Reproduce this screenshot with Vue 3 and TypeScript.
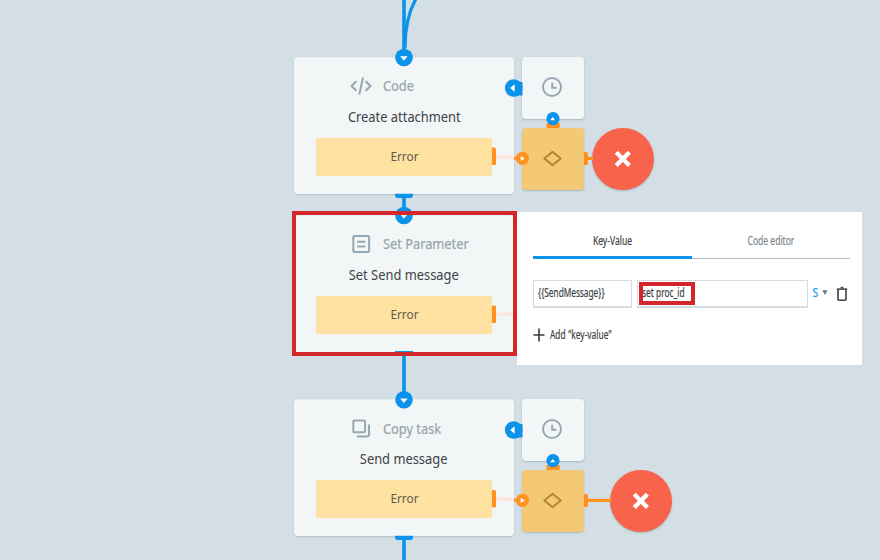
<script setup lang="ts">
import { ref } from 'vue'

type Kind = 'code' | 'param' | 'copy'
interface FlowNode { kind: Kind; type: string; title: string; y: number }
interface Escalation { y: number; end: number }

const nodes: FlowNode[] = [
  { kind: 'code', type: 'Code', title: 'Create attachment', y: 57 },
  { kind: 'param', type: 'Set Parameter', title: 'Set Send message', y: 215 },
  { kind: 'copy', type: 'Copy task', title: 'Send message', y: 399 },
]
const escalations: Escalation[] = [
  { y: 57, end: 592 },
  { y: 399, end: 610 },
]
const tabs = ['Key-Value', 'Code editor']
const activeTab = ref(0)
</script>

<template>
  <main class="canvas">
    <section v-for="n in nodes" :key="n.title" class="node" :class="n.kind" :style="{ top: n.y + 'px' }">
      <header class="node-head">
        <svg class="node-icon" viewBox="0 0 22 20" width="22" height="20" fill="none">
          <g v-if="n.kind === 'code'" stroke="#98a8b2" stroke-width="2.1">
            <path d="M6.4 5.3 1.5 10l4.9 4.7M15.6 5.3l4.9 4.7-4.9 4.7M13 1.6 9.3 18.5" />
          </g>
          <g v-else-if="n.kind === 'param'" stroke="#98a8b2" stroke-width="2">
            <rect x="3.3" y="2" width="15.8" height="16" rx="1" />
            <path d="M7 7.8h8.5M7 12.4h8.5" />
          </g>
          <g v-else stroke="#98a8b2" stroke-width="2">
            <rect x="3.3" y="1.6" width="11.8" height="11.6" rx="1" />
            <path d="M19 5.4V16a1.4 1.4 0 0 1-1.4 1.4H7" />
          </g>
        </svg>
        <span class="node-type">{{ n.type }}</span>
      </header>
      <div class="node-title"><span>{{ n.title }}</span></div>
      <div class="node-error"><span>Error</span></div>
    </section>

    <template v-for="e in escalations" :key="e.y">
      <div class="tile timer" :style="{ top: e.y + 'px' }">
        <svg width="22" height="22" viewBox="0 0 22 22" fill="none" stroke="#98a8b2" stroke-width="2">
          <circle cx="10" cy="10" r="9" /><path d="M10.2 5.8v5h4.3" />
        </svg>
      </div>
      <div class="tile condition" :style="{ top: e.y + 71 + 'px' }">
        <svg width="20" height="18" viewBox="0 0 20 18" fill="none" stroke="#b08534" stroke-width="1.9">
          <path d="M9.5 1.7 17.7 8.5 9.5 15.3 1.3 8.5Z" stroke-linejoin="round" />
        </svg>
      </div>
      <div class="stop" :style="{ top: e.y + 71 + 'px', left: e.end + 'px' }">
        <svg width="20" height="20" viewBox="0 0 20 20" stroke="#fff" stroke-width="4.3">
          <path d="M3.2 3.2 16.4 16.4M16.4 3.2 3.2 16.4" />
        </svg>
      </div>
    </template>

    <svg class="wires" width="880" height="560" viewBox="0 0 880 560" fill="none">
      <g stroke="#0b92e9" stroke-width="3.6">
        <path d="M404 0V52M404 197V212M404 353V395M404 538V560" />
        <path d="M405 48C405 26 408.5 12 415.8-1" stroke-width="3.2" />
      </g>
      <g fill="#0b92e9">
        <path v-for="y in [193.7, 351, 535.7]" :key="y" :d="`M395 ${y}h18v1.5q0 2.7-2.7 2.7h-12.6q-2.7 0-2.7-2.7z`" />
      </g>
      <g v-for="y in [57.5, 215.5, 399.7]" :key="'in' + y">
        <circle cx="404" :cy="y" r="8.8" fill="#0b92e9" />
        <path :d="`M400.2 ${y - 1.2}h7.4l-3.7 4.4z`" fill="#fff" />
      </g>
      <g v-for="y in [156.5, 314.5, 499]" :key="'err' + y">
        <path :d="`M492 ${y - 9}h2.5q1.5 0 1.5 1.5v14.5q0 1.5-1.5 1.5h-2.5z`" fill="#ff921d" />
      </g>
      <path d="M496 314.5 516 313.5" stroke="#fee7d8" stroke-width="3" />
      <g v-for="e in escalations" :key="'w' + e.y" :transform="`translate(0 ${e.y})`">
        <path d="M513 25h9.5v13.5H513z" fill="#0b92e9" />
        <circle cx="513.7" cy="31" r="8.8" fill="#0b92e9" />
        <path d="M510.2 31l4.4-3.7v7.4z" fill="#fff" />
        <path d="M546.5 66h13.2v5h-13.2z" fill="#ff921d" />
        <circle cx="553" cy="61.7" r="6.6" fill="#0b92e9" />
        <path d="M550.2 63.2h5l-2.5-3.3z" fill="#fff" />
        <path d="M496 99.7 515 101" stroke="#fee7d8" stroke-width="3.2" />
        <path d="M514 101.2h5" stroke="#ff921d" stroke-width="3" />
        <circle cx="522.4" cy="101.4" r="6.6" fill="#ff921d" />
        <path d="M520.7 98.9v5l4-2.5z" fill="#fff" />
        <path d="M584 95h2.5q1.5 0 1.5 1.5v10q0 1.5-1.5 1.5H584z" fill="#ff921d" />
        <path :d="`M588 101.4H${e.end + 1}`" stroke="#ff921d" stroke-width="3.2" />
      </g>
    </svg>

    <div class="selection"></div>

    <aside class="panel">
      <nav class="tabs">
        <button v-for="(t, i) in tabs" :key="t" class="tab" :class="{ active: activeTab === i }" @click="activeTab = i">
          <span class="narrow">{{ t }}</span>
        </button>
      </nav>
      <div class="row">
        <div class="field key"><span class="narrow">{{ '{' + '{SendMessage}' + '}' }}</span></div>
        <div class="field value"><span class="narrow">set proc_id</span><i class="mark"></i></div>
        <span class="kind narrow">S</span>
        <svg class="caret" width="6" height="6" viewBox="0 0 6 6"><path d="M.3.3h5.2L2.9 5.1z" fill="#617984" /></svg>
        <svg class="trash" width="12" height="16" viewBox="0 0 12 16" fill="none" stroke="#3b4247">
          <path d="M.8 3.1h10.4" stroke-width="1.5" /><path d="M4.6 1.7h2.8" stroke-width="1.7" />
          <path d="M2 3.2v10q0 1 1 1h6q1 0 1-1v-10" stroke-width="1.6" />
        </svg>
      </div>
      <div class="add">
        <svg width="12" height="14" viewBox="0 0 12 14" stroke="#333a3f" stroke-width="1.6"><path d="M6 .5v13M.5 7h11" /></svg>
        <span class="narrow">Add "key-value"</span>
      </div>
    </aside>
  </main>
</template>

<style>
body { margin: 0; background: #d3dfe5; }
</style>

<style scoped>
.canvas {
  position: relative;
  width: 880px;
  height: 560px;
  overflow: hidden;
  background: #d3dfe5;
  font-family: "Noto Sans", "Open Sans", sans-serif;
  color: #3c4245;
}
.node {
  position: absolute;
  left: 294px;
  width: 220px;
  height: 137px;
  box-sizing: border-box;
  padding: 19px 22px 0;
  border: 1px solid #e6edf0;
  border-width: 1px 0 0;
  border-radius: 4px;
  padding-top: 18px;
  background: #f2f6f7;
  box-shadow: 0 1px 2px rgba(80, 110, 125, .28);
}
.node-head { display: flex; height: 20px; padding-left: 34px; align-items: center; }
.copy .node-head { padding-top: 1px; margin-bottom: -1px; }
.node-icon { margin-right: 11px; }
.node-type { font-size: 14px; line-height: 20px; color: #95a4ac; -webkit-text-stroke: .2px #95a4ac; transform: scaleX(.915); transform-origin: 0 50%; white-space: nowrap; }
.node-title { margin-top: 11px; text-align: center; font-size: 14px; line-height: 20px; }
.node-title span { display: inline-block; transform: scaleX(.92); white-space: nowrap; }
.node-error {
  display: flex;
  align-items: center;
  justify-content: center;
  height: 38px;
  box-sizing: border-box;
  padding-bottom: 2px;
  margin-top: 11px;
  border-radius: 3px;
  background: #ffe2a1;
  font-size: 13px;
  color: #5c5a50;
}
.node-error span { transform: scaleX(.91); }
.tile, .stop {
  position: absolute;
  display: flex;
  align-items: center;
  justify-content: center;
  width: 62px;
  height: 62px;
  box-shadow: 0 1px 2px rgba(80, 110, 125, .33);
}
.tile { left: 522px; border-radius: 4px; }
.timer { background: #f2f6f7; }
.condition { background: #f3c975; }
.stop { border-radius: 50%; background: #f7634b; }
.wires { position: absolute; inset: 0; }
.selection {
  position: absolute;
  left: 292px;
  top: 211px;
  width: 225px;
  height: 145px;
  box-sizing: border-box;
  border: 4px solid #d4272b;
}
.panel {
  position: absolute;
  left: 517px;
  top: 212px;
  width: 345px;
  height: 153px;
  box-sizing: border-box;
  padding: 12px 12px 0 16px;
  background: #fff;
  font-size: 12px;
}
.narrow { display: inline-block; white-space: nowrap; -webkit-text-stroke: .2px currentColor; transform: scaleX(.7); }
.tabs { display: grid; grid-template-columns: 1fr 1fr; height: 35px; }
.tab {
  height: 35px;
  padding: 0 0 1px;
  border: 0;
  border-bottom: 1px solid #aebdc3;
  background: none;
  font: inherit;
  color: #7c878c;
}
.tab.active { padding: 0; border-bottom: 3px solid #0b92e9; color: #3c4245; }
.tab .narrow { transform: scaleX(.71); }
.row { display: flex; align-items: center; height: 28px; margin-top: 21px; }
.field {
  position: relative;
  box-sizing: border-box;
  height: 28px;
  padding-left: 4px;
  border: 1px solid #d5dde1;
  border-bottom-width: 2px;
  line-height: 24px;
}
.field .narrow, .add .narrow { transform-origin: 0 50%; }
.key { width: 99px; margin-right: 5px; }
.key .narrow { transform: scaleX(.69); }
.value { width: 171px; }
.mark { position: absolute; left: 1px; top: 1px; width: 56px; height: 23px; box-sizing: border-box; border: 4px solid #d4272b; }
.kind { margin: -3px 0 0 4px; color: #2497e8; transform: scaleX(.85); }
.caret { margin: -3px 0 0 3px; }
.trash { margin-left: 8px; }
.add { display: flex; align-items: center; gap: 5px; height: 20px; margin-top: 17px; }
.add .narrow { margin-top: -2px; }
</style>
